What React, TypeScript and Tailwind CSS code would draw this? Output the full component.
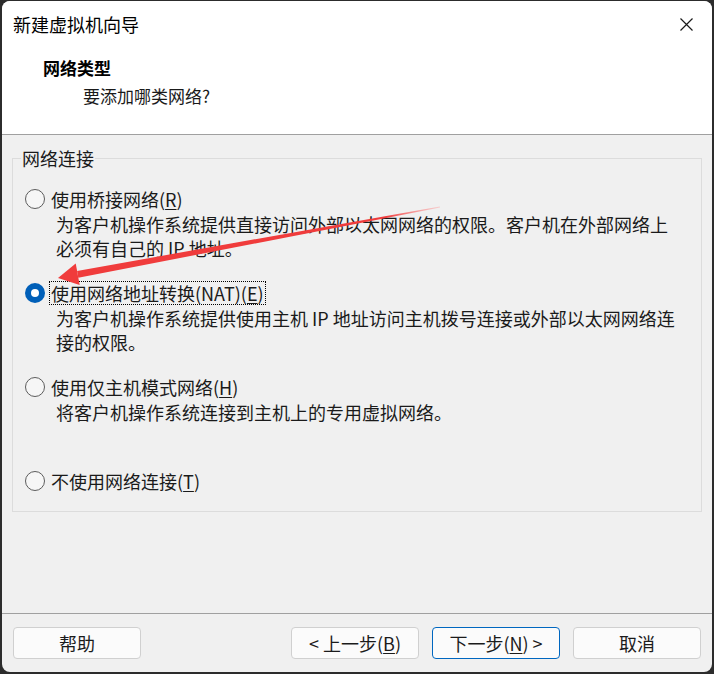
import type { ReactNode } from 'react'

const options = [
  {
    label: '使用桥接网络',
    key: 'R',
    lines: ['为客户机操作系统提供直接访问外部以太网网络的权限。客户机在外部网络上', '必须有自己的 IP 地址。'],
  },
  {
    label: '使用网络地址转换(NAT)',
    key: 'E',
    lines: ['为客户机操作系统提供使用主机 IP 地址访问主机拨号连接或外部以太网网络连', '接的权限。'],
    checked: true,
  },
  {
    label: '使用仅主机模式网络',
    key: 'H',
    lines: ['将客户机操作系统连接到主机上的专用虚拟网络。'],
  },
  {
    label: '不使用网络连接',
    key: 'T',
    lines: [],
  },
]

function Radio({ checked }: { checked?: boolean }) {
  if (checked) {
    return (
      <span className="flex h-[20px] w-[20px] shrink-0 items-center justify-center rounded-full bg-[#005fb8]">
        <span className="block h-[8px] w-[8px] rounded-full bg-white" />
      </span>
    )
  }
  return <span className="block h-[20px] w-[20px] shrink-0 rounded-full border border-[#5c5c5c] bg-[#f6f6f6]" />
}

function Button({ children, primary }: { children: ReactNode; primary?: boolean }) {
  return (
    <button
      className={`flex h-[32px] w-[128px] items-center justify-center rounded-[4px] bg-[#fbfbfb] text-[18px] leading-[24px] text-[#1b1b1b] ${
        primary ? 'border border-[#0067c0]' : 'border border-[#d0d0d0]'
      }`}
    >
      {children}
    </button>
  )
}

export default function App() {
  return (
    <div
      className="relative h-[674px] w-[714px] overflow-hidden bg-[#2c2c2c] px-[2px] pt-px pb-[2px]"
      style={{ fontFamily: '"Noto Sans CJK SC", "Noto Sans", sans-serif' }}
    >
      <div className="flex h-full flex-col overflow-hidden rounded-[8px] bg-[#f0f0f0]">
        {/* Header */}
        <div className="h-[133px] shrink-0 bg-white">
          <div className="flex h-[46px] items-center justify-between pl-[11px] pr-[19px]">
            <span className="text-[18px] leading-[24px] text-black">新建虚拟机向导</span>
            <svg width="13" height="13" viewBox="0 0 13 13" aria-hidden="true">
              <path d="M0.5 0.5L12.5 12.5M12.5 0.5L0.5 12.5" stroke="#1a1a1a" strokeWidth="1.2" />
            </svg>
          </div>
          <div className="mt-[9px] pl-[41px] text-[17px] font-bold leading-[24px] text-black">网络类型</div>
          <div className="mt-[4px] pl-[81px] text-[17px] leading-[24px] text-[#1a1a1a]">要添加哪类网络?</div>
        </div>
        <div className="h-px shrink-0 bg-[#a0a0a0]" />

        {/* Body */}
        <div className="flex-1">
          <fieldset className="mx-[10px] mt-[11px] h-[366px] border border-[#dcdcdc] pt-[17px]">
            <legend className="ml-[8px] px-[1px] text-[18px] leading-[24px] text-[#1a1a1a]">网络连接</legend>
            <div className="pl-[12px]">
              {options.map((opt, i) => (
                <div key={opt.key} className={i < 3 ? 'h-[94px]' : ''}>
                  <div className="flex h-[24px] items-center">
                    <Radio checked={opt.checked} />
                    <span
                      className={`ml-[4px] px-[1px] text-[18px] leading-[22px] text-[#1a1a1a] ${
                        opt.checked ? 'border border-dotted border-black' : 'border border-transparent'
                      }`}
                    >
                      {opt.label}(<span className="underline underline-offset-2">{opt.key}</span>)
                    </span>
                  </div>
                  <div className="pl-[31px] pt-px">
                    {opt.lines.map((line) => (
                      <div key={line} className="text-[18px] leading-[24px] text-[#1a1a1a]">
                        {line}
                      </div>
                    ))}
                  </div>
                </div>
              ))}
            </div>
          </fieldset>
        </div>

        {/* Footer */}
        <div className="h-px shrink-0 bg-[#a0a0a0]" />
        <div className="flex shrink-0 items-center justify-between px-[11px] py-[13px]">
          <Button>帮助</Button>
          <div className="flex gap-[13px]">
            <Button>
              &lt; 上一步(<span className="underline underline-offset-2">B</span>)
            </Button>
            <Button primary>
              下一步(<span className="underline underline-offset-2">N</span>) &gt;
            </Button>
            <Button>取消</Button>
          </div>
        </div>
      </div>

      {/* Annotation arrow */}
      <svg className="pointer-events-none absolute left-0 top-0" width="714" height="674" aria-hidden="true">
        <defs>
          <linearGradient id="shaft" x1="440" y1="207" x2="78" y2="274" gradientUnits="userSpaceOnUse">
            <stop offset="0" stopColor="#ff9a9a" stopOpacity="0.4" />
            <stop offset="0.15" stopColor="#f03c3c" />
            <stop offset="1" stopColor="#f03c3c" />
          </linearGradient>
        </defs>
        <polygon points="440.1,207.6 439.9,206.4 77.1,270.9 78.3,277.7" fill="url(#shaft)" />
        <polygon points="58,278 75.7,263.5 79.7,285.1" fill="#f03c3c" />
      </svg>
    </div>
  )
}
